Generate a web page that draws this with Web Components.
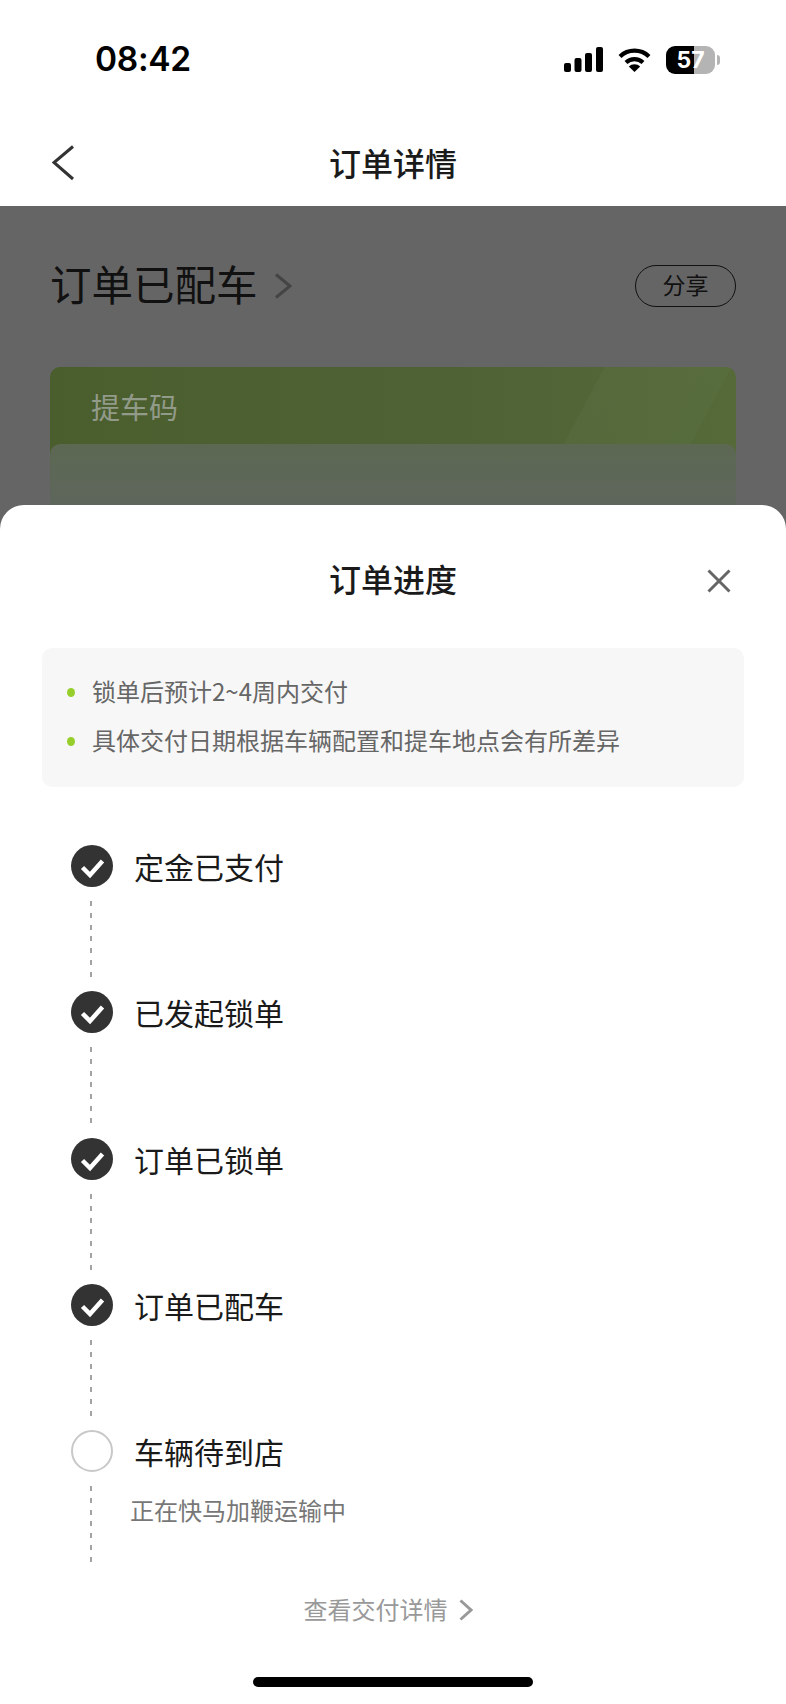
<!DOCTYPE html>
<html lang="zh-CN">
<head>
<meta charset="utf-8">
<title>订单进度</title>
<style>
  html, body { margin: 0; padding: 0; background: #fff; }
  body { width: 786px; height: 1704px; overflow: hidden; font-family: "Noto Sans CJK SC", "Noto Sans", sans-serif; }
</style>
</head>
<body>
<order-page>
  <status-bar time="08:42" battery="57"></status-bar>
  <nav-bar>订单详情</nav-bar>
  <order-summary status="订单已配车"></order-summary>
  <progress-sheet slot="sheet" heading="订单进度">
    <notice-item slot="notice">锁单后预计2~4周内交付</notice-item>
    <notice-item slot="notice">具体交付日期根据车辆配置和提车地点会有所差异</notice-item>
    <progress-step done>定金已支付</progress-step>
    <progress-step done>已发起锁单</progress-step>
    <progress-step done>订单已锁单</progress-step>
    <progress-step done>订单已配车</progress-step>
    <progress-step last>车辆待到店<span slot="note">正在快马加鞭运输中</span></progress-step>
  </progress-sheet>
</order-page>

<script>
// 整页容器
class OrderPage extends HTMLElement {
  constructor() {
    super();
    this.attachShadow({ mode: 'open' }).innerHTML = `
      <style>
        :host { display: flex; flex-direction: column; position: relative; width: 786px; height: 1704px; overflow: hidden; background: #fff; }
        .sheet { position: absolute; left: 0; right: 0; bottom: 0; }
      </style>
      <slot></slot>
      <div class="sheet"><slot name="sheet"></slot></div>`;
  }
}

class StatusBar extends HTMLElement {
  connectedCallback() {
    const time = this.getAttribute('time');
    const battery = this.getAttribute('battery');
    this.attachShadow({ mode: 'open' }).innerHTML = `
      <style>
        :host { display: flex; align-items: center; justify-content: space-between; box-sizing: border-box; height: 124px; padding: 40px 66px 46px 95px; color: #000; }
        .time { font: 600 33.5px/38px Inter, "Liberation Sans", sans-serif; letter-spacing: -0.3px; }
        .icons { display: flex; align-items: center; gap: 15px; }
        svg { display: block; }
        .battery { display: flex; align-items: center; gap: 2px; margin-top: 1px; }
        .cell { position: relative; display: flex; width: 49px; height: 28px; border-radius: 9px; overflow: hidden; }
        .full { width: 28px; background: #000; }
        .rest { flex: 1; background: #b4b4b4; }
        .num { position: absolute; inset: 0; text-align: center; color: #fff; font: 700 23px/28px Inter, "Liberation Sans", sans-serif; }
        .nub { width: 3px; height: 10px; background: #b4b4b4; border-radius: 0 5px 5px 0; }
      </style>
      <span class="time">${time}</span>
      <div class="icons">
        <svg width="39" height="25" viewBox="0 0 39 25" fill="#000">
          <rect x="0" y="16" width="7" height="9" rx="2"/>
          <rect x="10.5" y="11" width="7" height="14" rx="2"/>
          <rect x="21" y="6" width="7" height="19" rx="2"/>
          <rect x="32" y="0" width="7" height="25" rx="2"/>
        </svg>
        <svg width="33" height="25" viewBox="0 0 33 25">
          <path d="M2 9.5A21 21 0 0 1 31 9.5M8 15.5A12.5 12.5 0 0 1 25 15.5" fill="none" stroke="#000" stroke-width="4.2"/>
          <path d="M16.5 25L10.8 19.6A8 8 0 0 1 22.2 19.6Z" fill="#000"/>
        </svg>
        <div class="battery">
          <div class="cell"><div class="full"></div><div class="rest"></div><div class="num">${battery}</div></div>
          <div class="nub"></div>
        </div>
      </div>`;
  }
}

class NavBar extends HTMLElement {
  constructor() {
    super();
    this.attachShadow({ mode: 'open' }).innerHTML = `
      <style>
        :host { display: grid; grid-template-columns: 1fr auto 1fr; align-items: center; height: 82px; padding: 0 52px; color: #1a1a1a; font-size: 32px; font-weight: 500; }
        .title { padding-bottom: 7px; }
        svg { display: block; }
      </style>
      <svg width="24" height="40" viewBox="0 0 24 40"><path d="M21 1.5L2 17.5L21 34" fill="none" stroke="#333" stroke-width="3"/></svg>
      <div class="title"><slot></slot></div>
      <span></span>`;
  }
}

// 弹层后面被遮住的订单页
class OrderSummary extends HTMLElement {
  connectedCallback() {
    this.attachShadow({ mode: 'open' }).innerHTML = `
      <style>
        :host { display: block; flex: 1; box-sizing: border-box; padding: 59px 50px 0 50px; background: #656565; overflow: hidden; }
        .head { display: flex; align-items: center; height: 42px; }
        .status { font-size: 41.5px; line-height: 42px; color: #111; padding-bottom: 6px; }
        svg { display: block; margin-left: 16px; }
        .share { margin-left: auto; box-sizing: border-box; width: 101px; height: 42px; border: 1.5px solid #111; border-radius: 21px; text-align: center; font-size: 23px; line-height: 37px; color: #111; }
        .card { margin-top: 60px; height: 200px; border-radius: 10px; overflow: hidden;
          background: linear-gradient(118deg, transparent 70%, rgba(255,255,255,.025) 70%, rgba(255,255,255,.02) 86%, transparent 86%), linear-gradient(90deg, #4a5e2d, #4e6236 60%, #556a38); }
        .label { height: 77px; box-sizing: border-box; padding: 18px 0 0 41px; font-size: 29px; line-height: 42px; color: #929a89; }
        .code { height: 123px; border-radius: 10px 10px 0 0; background: linear-gradient(180deg, #5c6852, #5f6560 70%), linear-gradient(90deg, #5b6653, #626a58); }
      </style>
      <div class="head">
        <span class="status">${this.getAttribute('status')}</span>
        <svg width="18" height="26" viewBox="0 0 18 26"><path d="M2 1.5L16 13L2 24.5" fill="none" stroke="#444" stroke-width="3"/></svg>
        <div class="share">分享</div>
      </div>
      <div class="card">
        <div class="label">提车码</div>
        <div class="code"></div>
      </div>`;
  }
}

class ProgressSheet extends HTMLElement {
  connectedCallback() {
    this.attachShadow({ mode: 'open' }).innerHTML = `
      <style>
        :host { display: block; box-sizing: border-box; height: 1199px; background: #fff; border-radius: 24px 24px 0 0; }
        .head { display: grid; grid-template-columns: 1fr auto 1fr; align-items: center; padding: 53px 55px 0; height: 143px; box-sizing: border-box; align-content: start; font-size: 32px; line-height: 40px; font-weight: 500; color: #1a1a1a; }
        .head .title { padding-bottom: 4px; }
        .head svg { display: block; justify-self: end; margin-top: 2px; }
        .notices { box-sizing: border-box; margin: 0 42px; padding: 19px 24px 21px 25px; height: 139px; background: #f7f7f7; border-radius: 10px; }
        .steps { margin: 58px 0 0 71px; }
        .link { display: flex; align-items: center; justify-content: center; gap: 11px; margin-top: 18px; margin-bottom: 2px; height: 40px; font-size: 24px; color: #999; padding-right: 10px; }
        .link svg { display: block; margin-top: 3px; }
        .home { width: 280px; height: 10px; margin: 49px auto 0; background: #000; border-radius: 5px; }
      </style>
      <div class="head">
        <span></span>
        <span class="title">${this.getAttribute('heading')}</span>
        <svg width="24" height="24" viewBox="0 0 24 24"><path d="M1.5 1.5L22.5 22.5M22.5 1.5L1.5 22.5" fill="none" stroke="#666" stroke-width="3"/></svg>
      </div>
      <div class="notices"><slot name="notice"></slot></div>
      <div class="steps"><slot></slot></div>
      <div class="link">查看交付详情
        <svg width="14" height="22" viewBox="0 0 14 22"><path d="M1.5 1.5L12 11L1.5 20.5" fill="none" stroke="#999" stroke-width="3"/></svg>
      </div>
      <div class="home"></div>`;
  }
}

class NoticeItem extends HTMLElement {
  constructor() {
    super();
    this.attachShadow({ mode: 'open' }).innerHTML = `
      <style>
        :host { display: flex; align-items: center; gap: 17px; height: 49px; font-size: 24px; color: #666; }
        i { width: 8px; height: 9px; border-radius: 50%; background: #96cf2c; margin-top: 1px; }
        span { margin-top: -3px; }
      </style>
      <i></i><span><slot></slot></span>`;
  }
}

class ProgressStep extends HTMLElement {
  connectedCallback() {
    const done = this.hasAttribute('done');
    const last = this.hasAttribute('last');
    this.attachShadow({ mode: 'open' }).innerHTML = `
      <style>
        :host { display: grid; grid-template-columns: 42px 1fr; column-gap: 21px; height: ${last ? 140 : 146.3}px; color: #1a1a1a; }
        .dot { box-sizing: border-box; width: 42px; height: 42px; border-radius: 50%; }
        .dot.done { background: #333; }
        .dot.todo { border: 2px solid #c8c8c8; }
        .dot svg { display: block; }
        .line { width: 2px; height: ${last ? 83 : 76}px; margin: 14px 0 0 18.5px; background: repeating-linear-gradient(#a3a3a3 0 5px, transparent 5px 11.8px); }
        .label { font-size: 30px; line-height: 42px; }
        .note { display: block; margin: 21px 0 0 -4px; font-size: 24px; line-height: 34px; color: #777; }
      </style>
      <div>
        <div class="dot ${done ? 'done' : 'todo'}">${done ? '<svg width="42" height="42" viewBox="0 0 42 42"><path d="M11.5 22.5L19 30L31.5 16" fill="none" stroke="#fff" stroke-width="4.5"/></svg>' : ''}</div>
        <div class="line"></div>
      </div>
      <div>
        <div class="label"><slot></slot></div>
        <div class="note"><slot name="note"></slot></div>
      </div>`;
  }
}

customElements.define('order-page', OrderPage);
customElements.define('status-bar', StatusBar);
customElements.define('nav-bar', NavBar);
customElements.define('order-summary', OrderSummary);
customElements.define('progress-sheet', ProgressSheet);
customElements.define('notice-item', NoticeItem);
customElements.define('progress-step', ProgressStep);
</script>
</body>
</html>
